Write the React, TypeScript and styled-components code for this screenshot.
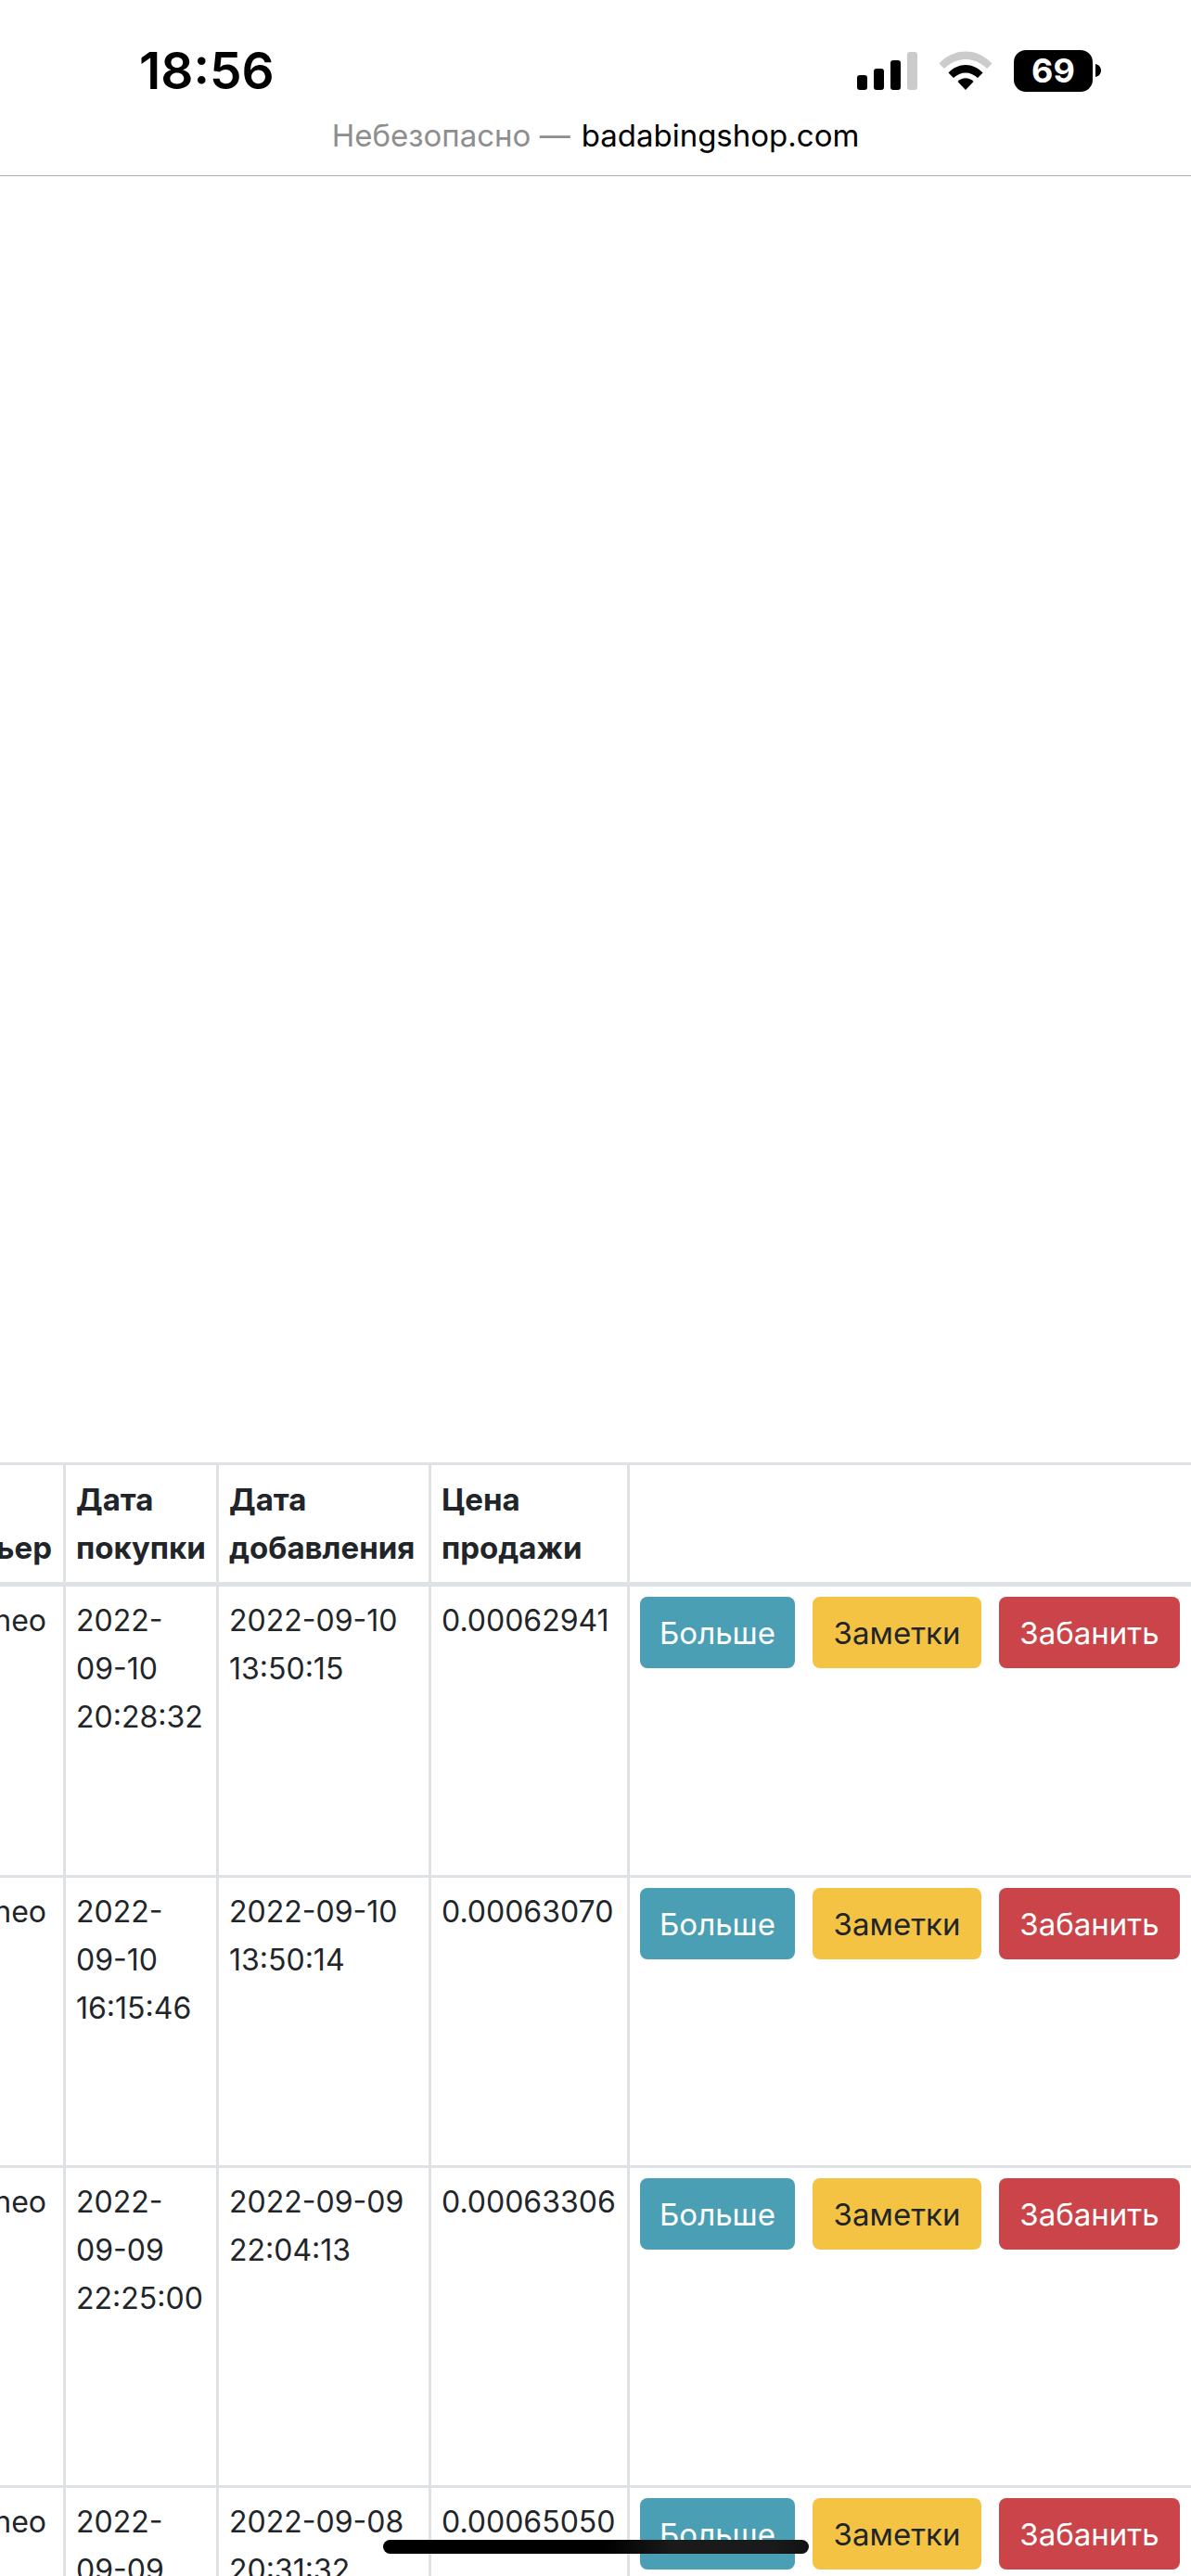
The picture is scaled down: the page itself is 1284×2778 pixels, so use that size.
import React from "react";
import styled, { createGlobalStyle } from "styled-components";

const GlobalStyle = createGlobalStyle`
  *, *::before, *::after { box-sizing: border-box; }
  body {
    margin: 0;
    background: #fff;
    color: #212529;
    font-family: Inter, "Liberation Sans", sans-serif;
    font-size: 33px;
    line-height: 52px;
  }
`;

const Screen = styled.div`
  display: flex;
  flex-direction: column;
  height: 100vh;
  overflow: hidden;
`;

const TopBar = styled.header`
  flex: none;
  border-bottom: 1px solid #b0b0b0;
  color: #000;
`;

const StatusBar = styled.div`
  display: flex;
  align-items: center;
  justify-content: space-between;
  height: 120px;
  padding: 32px 97px 0 150px;
`;

const Clock = styled.time`
  font-size: 55px;
  font-weight: 600;
  line-height: 56px;
`;

const StatusIcons = styled.div`
  display: flex;
  align-items: center;
  gap: 23px;
`;

const Battery = styled.div`
  display: flex;
  align-items: center;
  gap: 3px;
`;

const BatteryBody = styled.div`
  width: 85px;
  height: 45px;
  border-radius: 13px;
  background: #000;
  color: #fff;
  font-size: 36px;
  font-weight: 700;
  line-height: 45px;
  text-align: center;
`;

const AddressLine = styled.div`
  display: flex;
  justify-content: center;
  gap: 12px;
  height: 69px;
  color: #000;
`;

const Warning = styled.span`
  color: #8e8e8e;
`;

const Content = styled.main`
  flex: 1;
  min-height: 0;
  overflow: hidden;
  padding-top: 1387px;
`;

const Orders = styled.table`
  width: 100%;
  table-layout: fixed;
  border-collapse: separate;
  border-spacing: 0;
  border-top: 3px solid #dee2e6;
`;

const Col = styled.col<{ $width?: number }>`
  width: ${(p) => (p.$width ? `${p.$width}px` : "auto")};
`;

const HeadCell = styled.th`
  padding: 11px 12px 11px 11px;
  border-left: 3px solid #dee2e6;
  border-bottom: 5px solid #dee2e6;
  font-weight: 700;
  text-align: left;
  vertical-align: bottom;
  white-space: nowrap;

  &:first-child {
    border-left: 0;
    padding-left: 0;
    direction: rtl;
    text-align: right;
  }
`;

const Row = styled.tr<{ $height: number }>`
  height: ${(p) => p.$height}px;
`;

const Cell = styled.td`
  padding: 11px 12px 11px 11px;
  border-left: 3px solid #dee2e6;
  border-bottom: 3px solid #dee2e6;
  font-size: 32px;
  vertical-align: top;
  white-space: nowrap;

  &:first-child {
    border-left: 0;
    padding: 11px 18px 11px 0;
    direction: rtl;
    text-align: right;
  }
`;

const Actions = styled.div`
  display: grid;
  grid-template-columns: 167fr 182fr 195fr;
  gap: 19px;
  font-size: 33px;
`;

const tones = {
  info: ["#4b9fb5", "#fff"],
  warning: ["#f4c344", "#212529"],
  danger: ["#ca444a", "#fff"],
};

const ActionButton = styled.button<{ $tone: keyof typeof tones }>`
  height: 77px;
  padding: 0;
  border: 0;
  border-radius: 8px;
  background: ${(p) => tones[p.$tone][0]};
  color: ${(p) => tones[p.$tone][1]};
  font: inherit;
  white-space: nowrap;
`;

const HomeIndicator = styled.div`
  position: fixed;
  bottom: 24px;
  left: 50%;
  width: 459px;
  height: 15px;
  margin-left: -229px;
  border-radius: 8px;
  background: linear-gradient(90deg, #000 52%, #1a1a1a 68%, #1a1a1a 92%, #111 100%);
`;

const orders = [
  { courier: "neo", bought: ["2022-", "09-10", "20:28:32"], added: ["2022-09-10", "13:50:15"], price: "0.00062941", height: 314 },
  { courier: "neo", bought: ["2022-", "09-10", "16:15:46"], added: ["2022-09-10", "13:50:14"], price: "0.00063070", height: 313 },
  { courier: "neo", bought: ["2022-", "09-09", "22:25:00"], added: ["2022-09-09", "22:04:13"], price: "0.00063306", height: 345 },
  { courier: "neo", bought: ["2022-", "09-09"], added: ["2022-09-08", "20:31:32"], price: "0.00065050", height: 314 },
];

function Lines({ items }: { items: string[] }) {
  return (
    <>
      {items.map((item, i) => (
        <React.Fragment key={i}>
          {i > 0 && <br />}
          {item}
        </React.Fragment>
      ))}
    </>
  );
}

function SignalIcon() {
  return (
    <svg width="65" height="41" viewBox="0 0 65 41" aria-hidden="true">
      <rect x="0" y="25" width="11" height="16" rx="3" />
      <rect x="18" y="18" width="11" height="23" rx="3" />
      <rect x="36" y="9" width="11" height="32" rx="3" />
      <rect x="54" y="0" width="11" height="41" rx="3" fill="#cbcbcb" />
    </svg>
  );
}

function WifiIcon() {
  return (
    <svg width="58" height="42" viewBox="0 0 58 42" aria-hidden="true">
      <path d="M0.5 13.5C16-4 42-4 57.5 13.5L52 19C39 5.500 19 5.500 6 19Z" fill="#cbcbcb" />
      <path d="M10.500 23.500C21 12 37 12 47.500 23.500L42 29C34.500 21.500 23.500 21.500 16 29Z" />
      <path d="M20.500 33C25 28 33 28 37.500 33L29 42Z" />
    </svg>
  );
}

export default function App() {
  return (
    <>
      <GlobalStyle />
      <Screen>
        <TopBar>
          <StatusBar>
            <Clock>18:56</Clock>
            <StatusIcons>
              <SignalIcon />
              <WifiIcon />
              <Battery>
                <BatteryBody>69</BatteryBody>
                <svg width="6" height="14" viewBox="0 0 6 14" aria-hidden="true">
                  <path d="M0 0C4 1 6 4 6 7S4 13 0 14Z" />
                </svg>
              </Battery>
            </StatusIcons>
          </StatusBar>
          <AddressLine>
            <Warning>Небезопасно —</Warning>
            <span>badabingshop.com</span>
          </AddressLine>
        </TopBar>
        <Content>
          <Orders>
            <colgroup>
              <Col $width={68} />
              <Col $width={165} />
              <Col $width={229} />
              <Col $width={214} />
              <Col />
            </colgroup>
            <thead>
              <tr>
                <HeadCell scope="col">ьер</HeadCell>
                <HeadCell scope="col">Дата<br />покупки</HeadCell>
                <HeadCell scope="col">Дата<br />добавления</HeadCell>
                <HeadCell scope="col">Цена<br />продажи</HeadCell>
                <HeadCell as="td" />
              </tr>
            </thead>
            <tbody>
              {orders.map((order) => (
                <Row key={order.price} $height={order.height}>
                  <Cell>{order.courier}</Cell>
                  <Cell><Lines items={order.bought} /></Cell>
                  <Cell><Lines items={order.added} /></Cell>
                  <Cell>{order.price}</Cell>
                  <Cell>
                    <Actions>
                      <ActionButton type="button" $tone="info">Больше</ActionButton>
                      <ActionButton type="button" $tone="warning">Заметки</ActionButton>
                      <ActionButton type="button" $tone="danger">Забанить</ActionButton>
                    </Actions>
                  </Cell>
                </Row>
              ))}
            </tbody>
          </Orders>
        </Content>
        <HomeIndicator />
      </Screen>
    </>
  );
}
